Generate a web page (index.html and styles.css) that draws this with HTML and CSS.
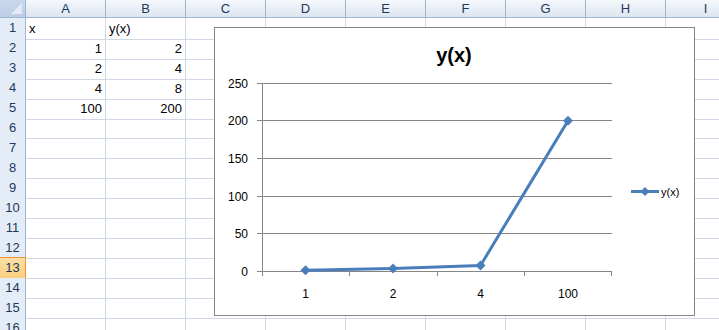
FILE: index.html
```html
<!DOCTYPE html>
<html lang="en">
    <head>
        <meta charset="UTF-8">
        <title>y(x) chart</title>
        <link rel="stylesheet" href="styles.css">
    </head>
    <body>
        <div class="sheet">
            <div class="row head-row">
                <div class="corner"></div>
                <div class="col-head">A</div>
                <div class="col-head">B</div>
                <div class="col-head">C</div>
                <div class="col-head">D</div>
                <div class="col-head">E</div>
                <div class="col-head">F</div>
                <div class="col-head">G</div>
                <div class="col-head">H</div>
                <div class="col-head">I</div>
            </div>
            <div class="row">
                <div class="row-head">1</div>
                <div class="cell">x</div><div class="cell">y(x)</div>
                <div class="cell"></div><div class="cell"></div><div class="cell"></div><div class="cell"></div><div class="cell"></div><div class="cell"></div><div class="cell"></div>
            </div>
            <div class="row">
                <div class="row-head">2</div>
                <div class="cell num">1</div><div class="cell num">2</div>
                <div class="cell"></div><div class="cell"></div><div class="cell"></div><div class="cell"></div><div class="cell"></div><div class="cell"></div><div class="cell"></div>
            </div>
            <div class="row">
                <div class="row-head">3</div>
                <div class="cell num">2</div><div class="cell num">4</div>
                <div class="cell"></div><div class="cell"></div><div class="cell"></div><div class="cell"></div><div class="cell"></div><div class="cell"></div><div class="cell"></div>
            </div>
            <div class="row">
                <div class="row-head">4</div>
                <div class="cell num">4</div><div class="cell num">8</div>
                <div class="cell"></div><div class="cell"></div><div class="cell"></div><div class="cell"></div><div class="cell"></div><div class="cell"></div><div class="cell"></div>
            </div>
            <div class="row">
                <div class="row-head">5</div>
                <div class="cell num">100</div><div class="cell num">200</div>
                <div class="cell"></div><div class="cell"></div><div class="cell"></div><div class="cell"></div><div class="cell"></div><div class="cell"></div><div class="cell"></div>
            </div>
            <div class="row">
                <div class="row-head">6</div>
                <div class="cell"></div><div class="cell"></div><div class="cell"></div><div class="cell"></div><div class="cell"></div><div class="cell"></div><div class="cell"></div><div class="cell"></div><div class="cell"></div>
            </div>
            <div class="row">
                <div class="row-head">7</div>
                <div class="cell"></div><div class="cell"></div><div class="cell"></div><div class="cell"></div><div class="cell"></div><div class="cell"></div><div class="cell"></div><div class="cell"></div><div class="cell"></div>
            </div>
            <div class="row">
                <div class="row-head">8</div>
                <div class="cell"></div><div class="cell"></div><div class="cell"></div><div class="cell"></div><div class="cell"></div><div class="cell"></div><div class="cell"></div><div class="cell"></div><div class="cell"></div>
            </div>
            <div class="row">
                <div class="row-head">9</div>
                <div class="cell"></div><div class="cell"></div><div class="cell"></div><div class="cell"></div><div class="cell"></div><div class="cell"></div><div class="cell"></div><div class="cell"></div><div class="cell"></div>
            </div>
            <div class="row">
                <div class="row-head">10</div>
                <div class="cell"></div><div class="cell"></div><div class="cell"></div><div class="cell"></div><div class="cell"></div><div class="cell"></div><div class="cell"></div><div class="cell"></div><div class="cell"></div>
            </div>
            <div class="row">
                <div class="row-head">11</div>
                <div class="cell"></div><div class="cell"></div><div class="cell"></div><div class="cell"></div><div class="cell"></div><div class="cell"></div><div class="cell"></div><div class="cell"></div><div class="cell"></div>
            </div>
            <div class="row">
                <div class="row-head">12</div>
                <div class="cell"></div><div class="cell"></div><div class="cell"></div><div class="cell"></div><div class="cell"></div><div class="cell"></div><div class="cell"></div><div class="cell"></div><div class="cell"></div>
            </div>
            <div class="row">
                <div class="row-head active">13</div>
                <div class="cell"></div><div class="cell"></div><div class="cell"></div><div class="cell"></div><div class="cell"></div><div class="cell"></div><div class="cell"></div><div class="cell"></div><div class="cell"></div>
            </div>
            <div class="row">
                <div class="row-head">14</div>
                <div class="cell"></div><div class="cell"></div><div class="cell"></div><div class="cell"></div><div class="cell"></div><div class="cell"></div><div class="cell"></div><div class="cell"></div><div class="cell"></div>
            </div>
            <div class="row">
                <div class="row-head">15</div>
                <div class="cell"></div><div class="cell"></div><div class="cell"></div><div class="cell"></div><div class="cell"></div><div class="cell"></div><div class="cell"></div><div class="cell"></div><div class="cell"></div>
            </div>
            <div class="row">
                <div class="row-head">16</div>
                <div class="cell"></div><div class="cell"></div><div class="cell"></div><div class="cell"></div><div class="cell"></div><div class="cell"></div><div class="cell"></div><div class="cell"></div><div class="cell"></div>
            </div>

            <!-- chart floats over the cells -->
            <div class="chart">
                <svg class="plot" width="479" height="287" viewBox="215 28 479 287">
                    <text class="title" x="454" y="62">y(x)</text>

                    <g class="grid">
                        <line x1="257" y1="83.5" x2="612" y2="83.5"/>
                        <line x1="257" y1="120.5" x2="612" y2="120.5"/>
                        <line x1="257" y1="158.5" x2="612" y2="158.5"/>
                        <line x1="257" y1="196.5" x2="612" y2="196.5"/>
                        <line x1="257" y1="233.5" x2="612" y2="233.5"/>
                        <line x1="257" y1="271.5" x2="612" y2="271.5"/>
                        <line x1="262.5" y1="83" x2="262.5" y2="276"/>
                        <line x1="349.5" y1="271" x2="349.5" y2="276"/>
                        <line x1="437.5" y1="271" x2="437.5" y2="276"/>
                        <line x1="524.5" y1="271" x2="524.5" y2="276"/>
                        <line x1="611.5" y1="271" x2="611.5" y2="276"/>
                    </g>

                    <g class="y-labels">
                        <text x="248" y="88">250</text>
                        <text x="248" y="125">200</text>
                        <text x="248" y="163">150</text>
                        <text x="248" y="201">100</text>
                        <text x="248" y="238">50</text>
                        <text x="248" y="276">0</text>
                    </g>

                    <g class="x-labels">
                        <text x="305.5" y="298">1</text>
                        <text x="393" y="298">2</text>
                        <text x="480.5" y="298">4</text>
                        <text x="568" y="298">100</text>
                    </g>

                    <polyline class="series" points="305.5,270.2 393,268.5 480.5,265.5 568,120.8"/>
                    <g class="marker">
                        <path d="M305.5 265.2 L310.5 270.2 L305.5 275.2 L300.5 270.2 Z"/>
                        <path d="M393 263.5 L398 268.5 L393 273.5 L388 268.5 Z"/>
                        <path d="M480.5 260.5 L485.5 265.5 L480.5 270.5 L475.5 265.5 Z"/>
                        <path d="M568 115.8 L573 120.8 L568 125.8 L563 120.8 Z"/>
                    </g>

                    <g class="legend">
                        <line class="series" x1="631" y1="191.5" x2="659" y2="191.5"/>
                        <path class="marker" d="M645 187 L649.5 191.5 L645 196 L640.5 191.5 Z"/>
                        <text x="661" y="195.5">y(x)</text>
                    </g>
                </svg>
            </div>
        </div>
    </body>
</html>
```

FILE: styles.css
```css
body {
    margin: 0;
    overflow: hidden;
    background: #ffffff;
    font-family: "Liberation Sans", Arial, sans-serif;
}

.sheet {
    position: relative;
    width: 746px;
    height: 330px;
    overflow: hidden;
}

.row {
    display: grid;
    grid-template-columns: 26px repeat(9, 80px);
    height: 20px;
}

.head-row {
    height: 18px;
}

.row > div {
    box-sizing: border-box;
    border-right: 1px solid #d0d7e5;
    border-bottom: 1px solid #d0d7e5;
}

.corner {
    position: relative;
    background: linear-gradient(#c9d8ec, #bccde6);
    border-color: #9eb6ce !important;
}

.corner::after {
    content: "";
    position: absolute;
    right: 3px;
    bottom: 3px;
    border-left: 11px solid transparent;
    border-bottom: 11px solid #e4ebf4;
}

.row > .col-head {
    background: linear-gradient(#f5f8fc, #dde5f0);
    border-color: #9eb6ce;
    border-bottom-color: #9eb6ce;
    color: #1e395b;
    font-size: 13px;
    line-height: 17px;
    text-align: center;
}

.row > .row-head {
    background: #e4ecf7;
    border-color: #9eb6ce;
    color: #1e395b;
    font-size: 13px;
    line-height: 20px;
    text-align: center;
}

.row > .row-head.active {
    background: linear-gradient(#fcdfa4, #f9cf82);
    border-color: #f29436;
    box-shadow: 0 -1px 0 #f29436;
}

.cell {
    font-size: 13px;
    line-height: 21px;
    padding: 0 3px;
    color: #000000;
    white-space: nowrap;
}

.cell.num {
    text-align: right;
}

.chart {
    position: absolute;
    left: 214px;
    top: 27px;
    width: 481px;
    height: 289px;
    box-sizing: border-box;
    border: 1px solid #868686;
    background: #ffffff;
}

.plot {
    display: block;
    font-family: "Liberation Sans", Arial, sans-serif;
}

.title {
    font-size: 20px;
    font-weight: bold;
    text-anchor: middle;
    fill: #000000;
}

.grid line {
    stroke: #868686;
    stroke-width: 1;
}

.y-labels text {
    font-size: 12px;
    text-anchor: end;
    fill: #000000;
}

.x-labels text {
    font-size: 12px;
    text-anchor: middle;
    fill: #000000;
}

.series {
    fill: none;
    stroke: #4a7ebb;
    stroke-width: 3;
    stroke-linejoin: round;
}

.marker path,
path.marker {
    fill: #4a7ebb;
}

.legend text {
    font-size: 11px;
    fill: #000000;
}
```
